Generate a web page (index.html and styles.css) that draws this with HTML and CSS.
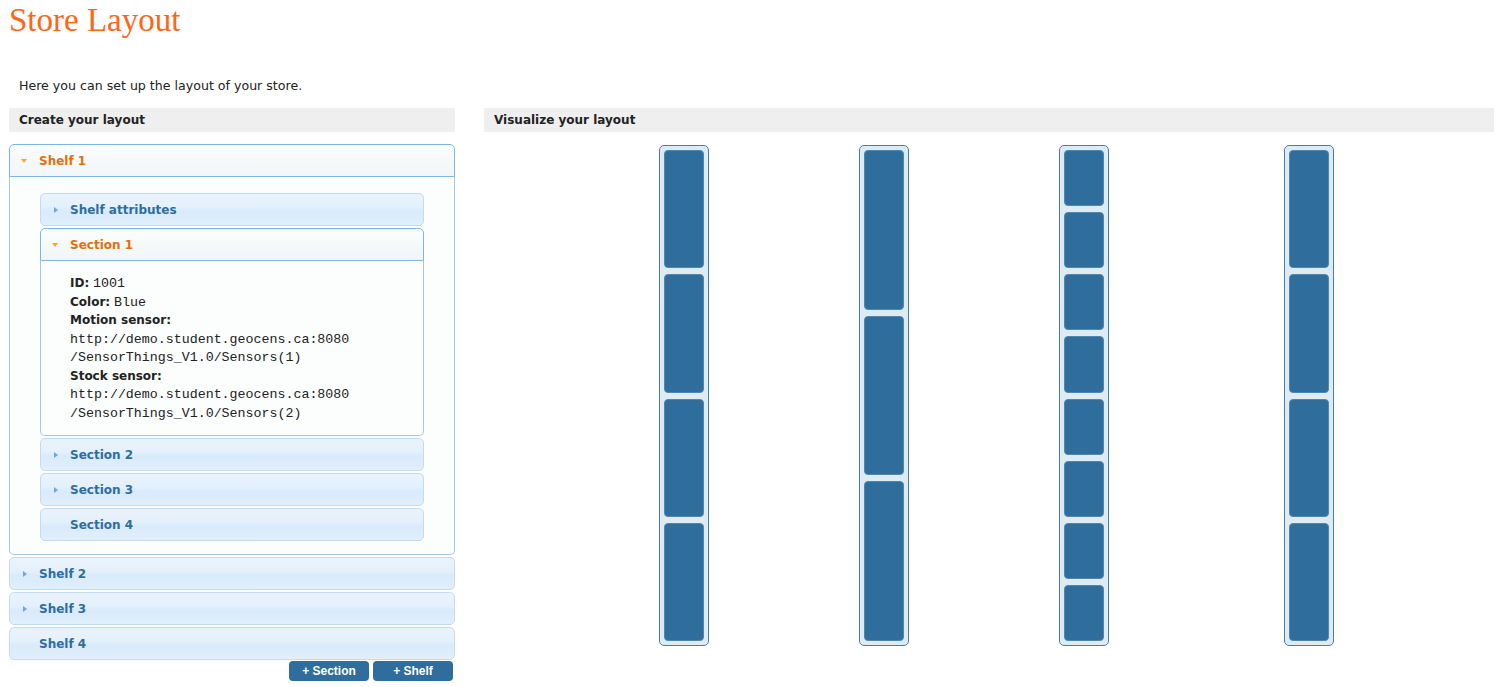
FILE: index.html
```html
<!DOCTYPE html>
<html lang="en">
<head>
<meta charset="utf-8">
<title>Store Layout</title>
<link rel="stylesheet" href="styles.css">
</head>
<body>
<h1 class="title">Store Layout</h1>
<p class="intro">Here you can set up the layout of your store.</p>
<div class="columns">
  <section class="col-create">
    <div class="bar">Create your layout</div>
    <div class="accordion">
      <div class="acc-item">
        <div class="acc-head active"><span class="caret down"></span>Shelf 1</div>
        <div class="acc-body shelf-body">
          <div class="acc-item">
            <div class="acc-head"><span class="caret right"></span>Shelf attributes</div>
          </div>
          <div class="acc-item">
            <div class="acc-head active"><span class="caret down"></span>Section 1</div>
            <div class="acc-body section-body">
              <div class="line"><b>ID:</b> <code>1001</code></div>
              <div class="line"><b>Color:</b> <code>Blue</code></div>
              <div class="line"><b>Motion sensor:</b></div>
              <div class="line"><code>http://demo.student.geocens.ca:8080</code></div>
              <div class="line"><code>/SensorThings_V1.0/Sensors(1)</code></div>
              <div class="line"><b>Stock sensor:</b></div>
              <div class="line"><code>http://demo.student.geocens.ca:8080</code></div>
              <div class="line"><code>/SensorThings_V1.0/Sensors(2)</code></div>
            </div>
          </div>
          <div class="acc-item">
            <div class="acc-head"><span class="caret right"></span>Section 2</div>
          </div>
          <div class="acc-item">
            <div class="acc-head"><span class="caret right"></span>Section 3</div>
          </div>
          <div class="acc-item">
            <div class="acc-head">Section 4</div>
          </div>
        </div>
      </div>
      <div class="acc-item">
        <div class="acc-head"><span class="caret right"></span>Shelf 2</div>
      </div>
      <div class="acc-item">
        <div class="acc-head"><span class="caret right"></span>Shelf 3</div>
      </div>
      <div class="acc-item">
        <div class="acc-head">Shelf 4</div>
      </div>
    </div>
    <div class="actions">
      <button class="btn" type="button">+ Section</button>
      <button class="btn" type="button">+ Shelf</button>
    </div>
  </section>
  <section class="col-vis">
    <div class="bar">Visualize your layout</div>
    <div class="canvas">
      <div class="shelf" style="left:175px">
        <div class="sec"></div><div class="sec"></div><div class="sec"></div><div class="sec"></div>
      </div>
      <div class="shelf" style="left:375px">
        <div class="sec"></div><div class="sec"></div><div class="sec"></div>
      </div>
      <div class="shelf" style="left:575px">
        <div class="sec"></div><div class="sec"></div><div class="sec"></div><div class="sec"></div>
        <div class="sec"></div><div class="sec"></div><div class="sec"></div><div class="sec"></div>
      </div>
      <div class="shelf" style="left:800px">
        <div class="sec"></div><div class="sec"></div><div class="sec"></div><div class="sec"></div>
      </div>
    </div>
  </section>
</div>
</body>
</html>
```

FILE: styles.css
```css
html, body {
  margin: 0;
  padding: 0;
}

body {
  padding: 0 7px 0 9px;
  background: #ffffff;
  font-family: "DejaVu Sans", Verdana, sans-serif;
  font-size: 12px;
  color: #222222;
}

.title {
  margin: 0;
  padding-top: 1px;
  font-family: "Liberation Serif", "Times New Roman", serif;
  font-weight: normal;
  font-size: 33px;
  line-height: 38px;
  color: #ff6517;
}

.intro {
  margin: 38px 0 13px;
  padding-left: 10px;
  font-size: 12.6px;
  line-height: 18px;
  color: #222222;
}

.columns {
  display: flex;
  gap: 29px;
  align-items: flex-start;
}

.col-create {
  width: 446px;
  flex: none;
}

.col-vis {
  flex: 1;
}

.bar {
  height: 24px;
  line-height: 24px;
  padding-left: 10px;
  background: #efefef;
  font-weight: bold;
  font-size: 12px;
  color: #222222;
}

.accordion {
  margin-top: 12px;
}

.acc-item {
  margin-top: 2px;
}

.acc-head {
  position: relative;
  height: 31px;
  display: flex;
  align-items: center;
  padding-left: 29px;
  border: 1px solid #c5dbec;
  border-radius: 5px;
  background: linear-gradient(#e9f3fd 0%, #e4f0fc 42%, #d9eafa 56%, #e2effc 100%);
  font-weight: bold;
  font-size: 12px;
  color: #2e6e9e;
}

.acc-head.active {
  border-color: #79b7e7;
  border-radius: 5px 5px 0 0;
  background: linear-gradient(#fdfefe 0%, #f6f9fa 45%, #f2f6f8 100%);
  color: #e17009;
}

.caret {
  position: absolute;
  top: 50%;
  width: 0;
  height: 0;
}

.caret.right {
  left: 13px;
  margin-top: -3px;
  border-left: 4px solid #6ea8d6;
  border-top: 3px solid transparent;
  border-bottom: 3px solid transparent;
}

.caret.down {
  left: 11px;
  margin-top: -2px;
  border-top: 4px solid #f3a82a;
  border-left: 3.5px solid transparent;
  border-right: 3.5px solid transparent;
}

.acc-body {
  border: 1px solid #a6c9e2;
  border-top: 0;
  border-radius: 0 0 5px 5px;
  background: #fcfdfd;
}

.shelf-body {
  padding: 14px 30px 13px 30px;
}

.section-body {
  padding: 13px 20px 13px 29px;
}

.line {
  height: 18.5px;
  line-height: 18.5px;
  white-space: nowrap;
}

.line b {
  font-weight: bold;
  color: #222222;
}

.line code {
  font-family: "Liberation Mono", "Courier New", monospace;
  font-size: 13.3px;
  line-height: 1;
  color: #222222;
}

.actions {
  display: flex;
  justify-content: flex-end;
  gap: 4px;
  margin-top: 1px;
  padding-right: 2px;
}

.btn {
  width: 80px;
  height: 20px;
  padding: 0;
  border: 0;
  border-radius: 4px;
  background: #2e6d9c;
  color: #ffffff;
  font-family: "Liberation Sans", Arial, sans-serif;
  font-weight: bold;
  font-size: 12px;
  line-height: 20px;
}

.canvas {
  position: relative;
  height: 530px;
}

.shelf {
  position: absolute;
  top: 13px;
  width: 50px;
  height: 501px;
  box-sizing: border-box;
  padding: 4px;
  border: 1px solid #4a7eaa;
  border-radius: 5px;
  background: #deebf3;
  display: flex;
  flex-direction: column;
  gap: 6px;
}

.sec {
  flex: 1;
  border: 1px solid #4f87b3;
  border-radius: 4px;
  background: #2e6d9c;
}
```
